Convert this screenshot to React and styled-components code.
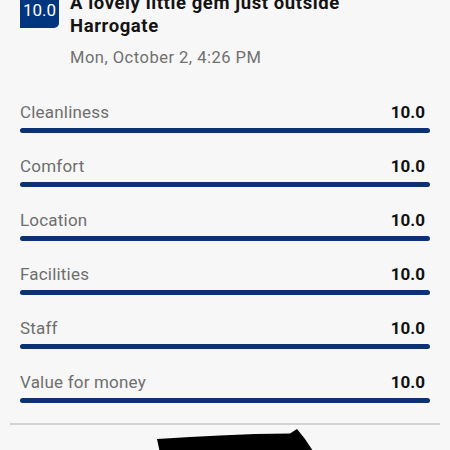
import React from "react";
import styled, { createGlobalStyle } from "styled-components";

const GlobalStyle = createGlobalStyle`
  html, body {
    margin: 0;
    padding: 0;
    background: #f7f7f7;
    overflow: hidden;
  }
  body {
    font-family: Roboto, "Noto Sans", sans-serif;
    width: 450px;
    height: 450px;
  }
`;

const Page = styled.div`
  width: 450px;
  height: 450px;
  overflow: hidden;
  background: #f7f7f7;
`;

const Header = styled.div`
  display: flex;
  align-items: flex-start;
  gap: 11px;
  padding: 0 20px;
  margin-top: -8px;
`;

const Badge = styled.div`
  flex: none;
  width: 39px;
  padding: 8px 0;
  background: #003580;
  color: #fff;
  font-size: 17px;
  line-height: 20px;
  text-align: center;
  border-radius: 5px 5px 5px 0;
`;

const HeaderText = styled.div`
  display: flex;
  flex-direction: column;
`;

const Title = styled.div`
  font-size: 18.5px;
  line-height: 23px;
  font-weight: 700;
  letter-spacing: 0.6px;
  color: #141414;
`;

const DateText = styled.div`
  margin-top: 10px;
  font-size: 16.5px;
  line-height: 20px;
  letter-spacing: 0.5px;
  color: #707070;
`;

const Scores = styled.div`
  display: flex;
  flex-direction: column;
  gap: 22px;
  padding: 0 20px;
  margin-top: 33px;
`;

const Row = styled.div`
  display: flex;
  flex-direction: column;
  gap: 5px;
`;

const RowHead = styled.div`
  display: flex;
  justify-content: space-between;
  align-items: baseline;
  padding-right: 5px;
  font-size: 17px;
  line-height: 22px;
`;

const Label = styled.span`
  color: #6e6e6e;
  letter-spacing: 0.2px;
`;

const Value = styled.span`
  color: #111;
  font-weight: 700;
`;

const Bar = styled.div`
  height: 5px;
  border-radius: 3px;
  background: #0b3374;
`;

const Divider = styled.div`
  margin: 20px 10px 0;
  height: 2px;
  background: #d2d2d2;
`;

const Redaction = styled.svg`
  display: block;
  width: 450px;
  height: 28px;
`;

const scores = [
  ["Cleanliness", "10.0"],
  ["Comfort", "10.0"],
  ["Location", "10.0"],
  ["Facilities", "10.0"],
  ["Staff", "10.0"],
  ["Value for money", "10.0"],
];

export default function App() {
  return (
    <Page>
      <GlobalStyle />
      <Header>
        <Badge>10.0</Badge>
        <HeaderText>
          <Title>
            A lovely little gem just outside
            <br />
            Harrogate
          </Title>
          <DateText>Mon, October 2, 4:26 PM</DateText>
        </HeaderText>
      </Header>
      <Scores>
        {scores.map(([label, value]) => (
          <Row key={label}>
            <RowHead>
              <Label>{label}</Label>
              <Value>{value}</Value>
            </RowHead>
            <Bar />
          </Row>
        ))}
      </Scores>
      <Divider />
      <Redaction viewBox="0 0 450 28">
        <path
          d="M157 14 L190 12 L220 10.5 L255 9 L290 8.5 L297 4 L305 14 L313 26 L313 28 L160 28 Z"
          fill="#000"
        />
      </Redaction>
    </Page>
  );
}
